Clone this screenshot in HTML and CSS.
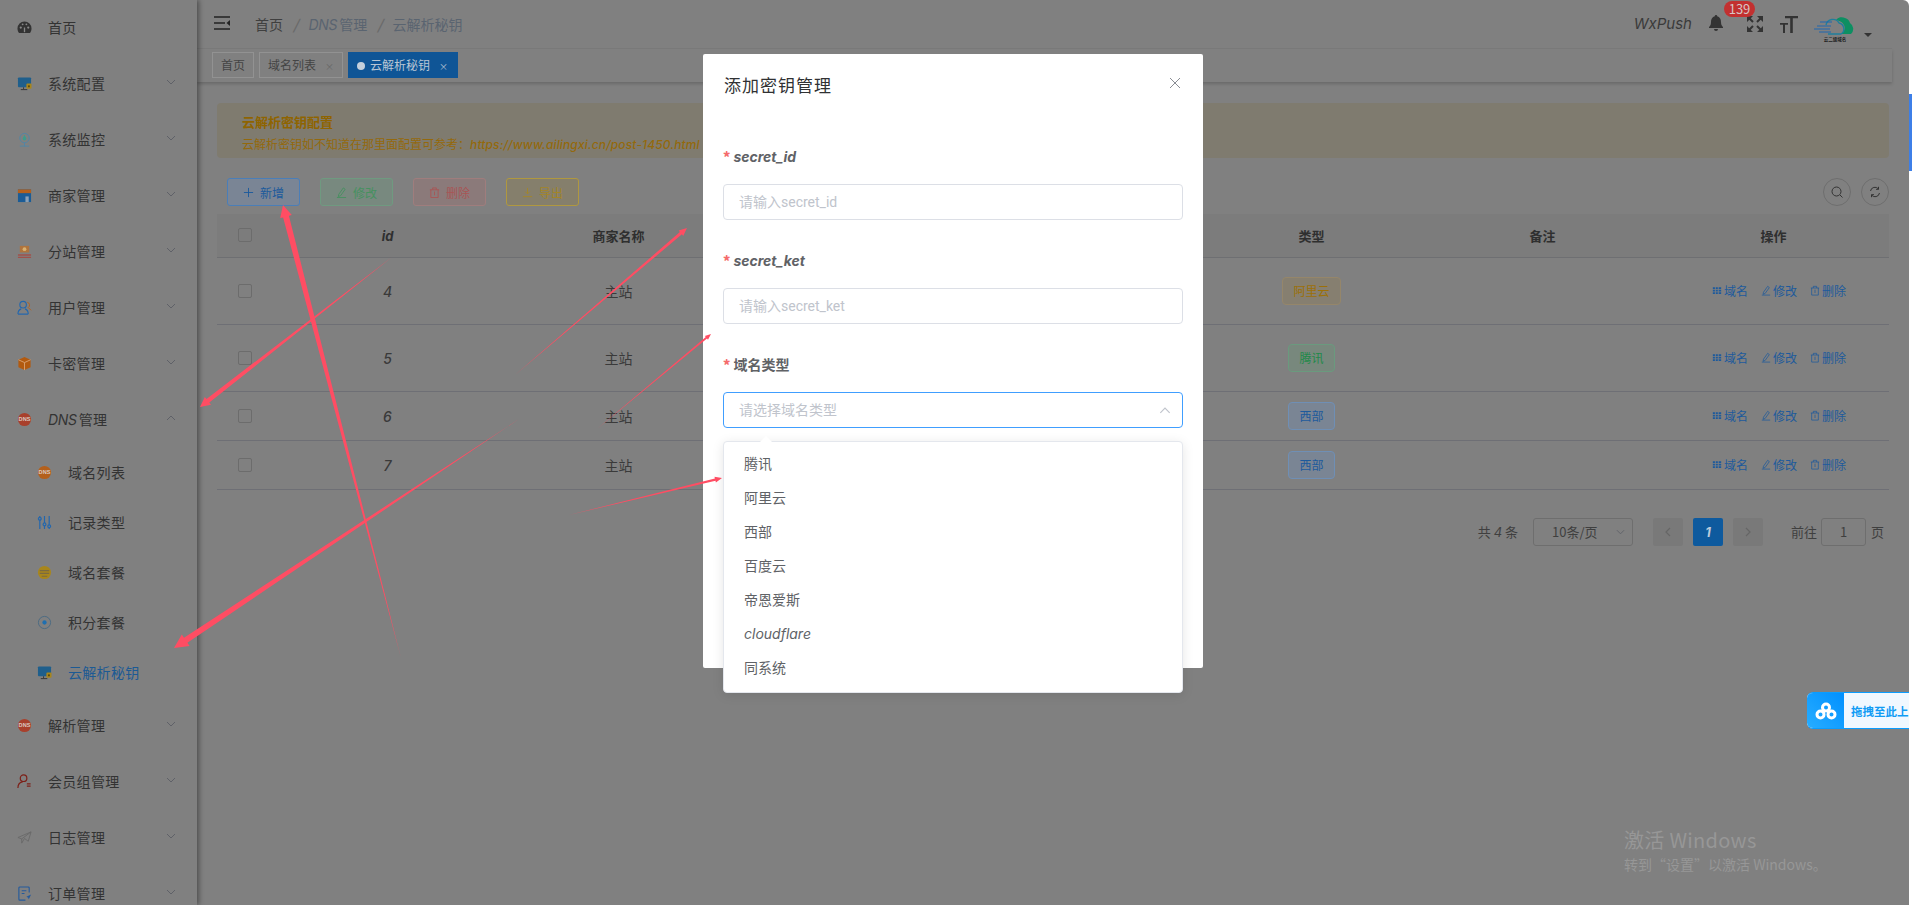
FILE: index.html
```html
<!DOCTYPE html>
<html lang="zh-CN">
<head>
    <meta charset="UTF-8">
    <title>云解析秘钥</title>
    <link rel="stylesheet" href="styles.css">
</head>
<body>

<div class="app">
    <!-- sidebar -->
    <aside class="side">
        <div class="nav-item">
            <svg class="nav-icon" viewBox="0 0 16 16"><path fill="#333" d="M8 1.500a7.500 7.500 0 0 0-7.500 7.500c0 2 .7 3.600 1.600 4.800h11.800c.9-1.200 1.600-2.800 1.600-4.800A7.500 7.500 0 0 0 8 1.500z"/><circle cx="4" cy="8" r="1.200" fill="#888"/><circle cx="12" cy="8" r="1.200" fill="#888"/><circle cx="6" cy="4.600" r="1" fill="#888"/><circle cx="10" cy="4.600" r="1" fill="#888"/><path stroke="#888" stroke-width="1.400" d="M8 13V8"/></svg>
            <span class="nav-text">首页</span>
        </div>
        <div class="nav-item">
            <svg class="nav-icon" viewBox="0 0 16 16"><rect x="1" y="1.500" width="14" height="10.500" rx="1" fill="#1f5f8c"/><path stroke="#333" d="M4 14.500h7M7 12v2"/><rect x="10" y="8" width="5.500" height="5.500" rx="1" fill="#a8861c"/><rect x="11.700" y="10" width="2" height="2" fill="#5a4a10"/></svg>
            <span class="nav-text">系统配置</span>
            <svg class="chev" viewBox="0 0 10 6"><path d="M1 1l4 4 4-4"/></svg>
        </div>
        <div class="nav-item">
            <svg class="nav-icon" viewBox="0 0 16 16"><circle cx="8" cy="6.500" r="5" fill="none" stroke="#4f86a8"/><path fill="#3d9c8c" d="M8 3l2 4a2 2 0 1 1-4 0z"/><path stroke="#4f86a8" fill="none" d="M3 15h10M8 11.500v3.500"/></svg>
            <span class="nav-text">系统监控</span>
            <svg class="chev" viewBox="0 0 10 6"><path d="M1 1l4 4 4-4"/></svg>
        </div>
        <div class="nav-item">
            <svg class="nav-icon" viewBox="0 0 16 16"><rect x="1" y="1.500" width="14" height="13.500" fill="#1b5c96"/><rect x="1" y="1.500" width="14" height="4" fill="#b4601c"/><rect x="9" y="9" width="3.500" height="6" fill="#8a9fb5"/></svg>
            <span class="nav-text">商家管理</span>
            <svg class="chev" viewBox="0 0 10 6"><path d="M1 1l4 4 4-4"/></svg>
        </div>
        <div class="nav-item">
            <svg class="nav-icon" viewBox="0 0 16 16"><path fill="#b0743c" d="M3 2h10v7H3z"/><circle cx="8" cy="5.500" r="2" fill="#d8b070"/><path fill="#a0504a" d="M1 11h14v1.500H1zM1 13.500h14V15H1z"/></svg>
            <span class="nav-text">分站管理</span>
            <svg class="chev" viewBox="0 0 10 6"><path d="M1 1l4 4 4-4"/></svg>
        </div>
        <div class="nav-item">
            <svg class="nav-icon" viewBox="0 0 16 16"><g fill="none" stroke="#2467ad" stroke-width="1.200"><circle cx="6.500" cy="5" r="3.500"/><path d="M1 15c0-4 2-5 3.500-5.500M12 15c0-4-2-5-3.500-5.500M1 15h11"/></g><path fill="none" stroke="#b4601c" d="M11 2.500a3 3 0 0 1 1 5.500l3 3"/></svg>
            <span class="nav-text">用户管理</span>
            <svg class="chev" viewBox="0 0 10 6"><path d="M1 1l4 4 4-4"/></svg>
        </div>
        <div class="nav-item">
            <svg class="nav-icon" viewBox="0 0 16 16"><path fill="#b25a10" d="M8 1l6.500 3v8L8 15l-6.500-3V4z"/><path stroke="#d8a070" fill="none" d="M1.500 4L8 7l6.500-3M8 7v8"/></svg>
            <span class="nav-text">卡密管理</span>
            <svg class="chev" viewBox="0 0 10 6"><path d="M1 1l4 4 4-4"/></svg>
        </div>
        <div class="nav-item">
            <svg class="nav-icon" viewBox="0 0 16 16"><circle cx="8" cy="8" r="7" fill="#a8402c"/><text x="8" y="10" class="dns-mark">DNS</text></svg>
            <span class="nav-text"><i class="en dns-word">DNS</i>管理</span>
            <svg class="chev" viewBox="0 0 10 6"><path d="M1 5l4-4 4 4"/></svg>
        </div>
        <div class="nav-sub">
            <svg class="nav-icon" viewBox="0 0 16 16"><circle cx="8" cy="8" r="7" fill="#b4601c"/><text x="8" y="10" class="dns-mark">DNS</text></svg>
            <span class="nav-text">域名列表</span>
        </div>
        <div class="nav-sub">
            <svg class="nav-icon" viewBox="0 0 16 16"><g fill="none" stroke="#2467ad" stroke-width="1.300"><path d="M3 1v14M8 1v14M13 1v14"/><circle cx="3" cy="4" r="1.500" fill="#808080"/><circle cx="8" cy="10" r="1.500" fill="#808080"/><circle cx="13" cy="12" r="1.500" fill="#808080"/></g></svg>
            <span class="nav-text">记录类型</span>
        </div>
        <div class="nav-sub">
            <svg class="nav-icon" viewBox="0 0 16 16"><circle cx="8" cy="8" r="7" fill="#a8861c"/><path stroke="#7a6a40" stroke-width="1.300" d="M3 6h10M3 9h10M5 12h6"/></svg>
            <span class="nav-text">域名套餐</span>
        </div>
        <div class="nav-sub">
            <svg class="nav-icon" viewBox="0 0 16 16"><circle cx="8" cy="8" r="6.500" fill="none" stroke="#4a6a82"/><circle cx="8" cy="8" r="2.300" fill="#1f6fb0"/></svg>
            <span class="nav-text">积分套餐</span>
        </div>
        <div class="nav-sub active">
            <svg class="nav-icon" viewBox="0 0 16 16"><rect x="1" y="1.500" width="14" height="10.500" rx="1" fill="#1f5f8c"/><path stroke="#333" d="M4 14.500h7M7 12v2"/><rect x="10" y="8" width="5.500" height="5.500" rx="1" fill="#a8861c"/><rect x="11.700" y="10" width="2" height="2" fill="#5a4a10"/></svg>
            <span class="nav-text">云解析秘钥</span>
        </div>
        <div class="nav-item">
            <svg class="nav-icon" viewBox="0 0 16 16"><circle cx="8" cy="8" r="7" fill="#a8402c"/><text x="8" y="10" class="dns-mark">DNS</text></svg>
            <span class="nav-text">解析管理</span>
            <svg class="chev" viewBox="0 0 10 6"><path d="M1 1l4 4 4-4"/></svg>
        </div>
        <div class="nav-item">
            <svg class="nav-icon" viewBox="0 0 16 16"><g fill="none" stroke="#7c2018" stroke-width="1.300"><circle cx="7" cy="4.500" r="3.500"/><path d="M1 15c0-4 2-6 5-6.500"/><path d="M10.500 10.500h4M10.500 13h4"/></g></svg>
            <span class="nav-text">会员组管理</span>
            <svg class="chev" viewBox="0 0 10 6"><path d="M1 1l4 4 4-4"/></svg>
        </div>
        <div class="nav-item">
            <svg class="nav-icon" viewBox="0 0 16 16"><path fill="none" stroke="#6a6a6a" d="M1 8l14-6-3 10-4-3-3 5V9.500zM5 9.500L15 2"/></svg>
            <span class="nav-text">日志管理</span>
            <svg class="chev" viewBox="0 0 10 6"><path d="M1 1l4 4 4-4"/></svg>
        </div>
        <div class="nav-item">
            <svg class="nav-icon" viewBox="0 0 16 16"><path fill="none" stroke="#245a9c" stroke-width="1.200" d="M13 7V2a1 1 0 0 0-1-1H3a1 1 0 0 0-1 1v12a1 1 0 0 0 1 1h6M5 5h5M5 8h3"/><path fill="#245a9c" d="M15 9l-5 2.500 2 1 .5 2z"/></svg>
            <span class="nav-text">订单管理</span>
            <svg class="chev" viewBox="0 0 10 6"><path d="M1 1l4 4 4-4"/></svg>
        </div>
    </aside>

    <div class="main">
        <!-- top bar -->
        <header class="topbar">
            <svg class="toggle" viewBox="0 0 16 14"><path stroke="#222" stroke-width="1.500" d="M0 1h16M0 7h11M0 13h16"/><path fill="#222" d="M16 4v6l-3.500-3z"/></svg>
            <div class="crumbs">
                <span class="crumb-home">首页</span>
                <i class="crumb-sep">/</i>
                <span class="crumb"><i class="en dns-word">DNS</i>管理</span>
                <i class="crumb-sep">/</i>
                <span class="crumb">云解析秘钥</span>
            </div>
            <div class="top-right">
                <span class="wxpush en">WxPush</span>
                <div class="bell">
                    <svg viewBox="0 0 14 16" width="14" height="16"><path fill="#333" d="M7 0a1.200 1.200 0 0 1 1.200 1.300C11 2 12 4.500 12 7c0 3 1 4 2 5v1H0v-1c1-1 2-2 2-5 0-2.500 1-5 3.800-5.700A1.200 1.200 0 0 1 7 0zM5 14h4a2 2 0 0 1-4 0z"/></svg>
                    <span class="badge">139</span>
                </div>
                <svg class="fs" viewBox="0 0 18 18"><g fill="none" stroke="#333" stroke-width="2"><path d="M3 3l4 4M15 15l-4-4M15 3l-4 4M3 15l4-4"/></g><path fill="#333" d="M1 1h6L1 7zM17 17h-6l6-6zM17 1v6l-6-6zM1 17v-6l6 6z"/></svg>
                <svg class="tt" viewBox="0 0 18 18"><path fill="#333" d="M5 1h13v2.200h-5.200V18h-2.600V3.200H5zM0 8h8v1.800H5V18H3V9.800H0z"/></svg>
                <svg class="logo" viewBox="0 0 40 25">
                    <path fill="#0d8f62" d="M22 3a7 7 0 0 1 9-2 7 7 0 0 1 5 5 7 7 0 0 1 1 11H27c6-4 5-12-5-14z"/>
                    <path fill="none" stroke="#1f7f9c" stroke-width="1.400" d="M12 8a7 7 0 0 1 13-2 6 6 0 0 1 2 11H14"/>
                    <path stroke="#1f66b0" stroke-width="1" d="M6 5h12M3 9h14M0 12h16M5 15h12"/>
                    <text x="21" y="24" class="logo-text">云二级域名</text>
                </svg>
                <i class="caret"></i>
            </div>
        </header>

        <nav class="tabs">
            <span class="tab">首页</span>
            <span class="tab">域名列表<b class="tab-x">×</b></span>
            <span class="tab tab-on"><i class="tab-dot"></i>云解析秘钥<b class="tab-x">×</b></span>
        </nav>

        <section class="content">
            <div class="alert">
                <div class="alert-title">云解析密钥配置</div>
                <div class="alert-desc">云解析密钥如不知道在那里面配置可参考：<i class="en alert-url">https://www.ailingxi.cn/post-1450.html</i></div>
            </div>

            <div class="toolbar">
                <button class="btn btn-new"><svg viewBox="0 0 12 12"><path d="M6 1v10M1 6h10"/></svg>新增</button>
                <button class="btn btn-edit"><svg viewBox="0 0 12 12"><path d="M3 8l5-7 2 1.500-5 7-2.500 1zM1 11.500h10"/></svg>修改</button>
                <button class="btn btn-del"><svg viewBox="0 0 12 12"><path d="M1 3h10M4 3V1h4v2M2 3v8.500h8V3M6 5v4"/></svg>删除</button>
                <button class="btn btn-exp"><svg viewBox="0 0 12 12"><path d="M6 1v6M3.500 5L6 7.500 8.500 5M1 10.500h10"/></svg>导出</button>
                <div class="tool-right">
                    <span class="round"><svg viewBox="0 0 12 12"><circle cx="5.500" cy="5.500" r="4.500"/><path d="M9 9l2.500 2.500"/></svg></span>
                    <span class="round"><svg viewBox="0 0 12 12"><path d="M1.500 5a4.500 4.500 0 0 1 8-2M10.500 7a4.500 4.500 0 0 1-8 2M9.500 .8v2.500H7M2.500 11.200V8.700H5"/></svg></span>
                </div>
            </div>

            <table class="grid">
                <colgroup>
                    <col class="col-check"><col><col><col><col><col><col><col>
                </colgroup>
                <thead>
                    <tr>
                        <th><i class="check"></i></th>
                        <th><i class="en">id</i></th>
                        <th>商家名称</th>
                        <th></th>
                        <th></th>
                        <th>类型</th>
                        <th>备注</th>
                        <th>操作</th>
                    </tr>
                </thead>
                <tbody>
                    <tr class="row-tall">
                        <td><i class="check"></i></td>
                        <td><i class="en">4</i></td>
                        <td>主站</td>
                        <td></td>
                        <td></td>
                        <td><span class="tag tag-yellow">阿里云</span></td>
                        <td></td>
                        <td>
                            <div class="acts">
                                <a><svg viewBox="0 0 12 12"><path class="fill" d="M1 2h2.500v2.200H1zM4.500 2H7v2.200H4.500zM8 2h3v2.200H8zM1 5h2.500v2.200H1zM4.500 5H7v2.200H4.500zM8 5h3v2.200H8zM1 8h2.500v2.200H1zM4.500 8H7v2.200H4.500zM8 8h3v2.200H8z"/></svg>域名</a>
                                <a><svg viewBox="0 0 12 12"><path d="M3 8l5-7 2 1.500-5 7-2.500 1zM1 11.500h10"/></svg>修改</a>
                                <a><svg viewBox="0 0 12 12"><path d="M1 3h10M4 3V1h4v2M2 3v8.500h8V3M6 5v4"/></svg>删除</a>
                            </div>
                        </td>
                    </tr>
                    <tr class="row-tall">
                        <td><i class="check"></i></td>
                        <td><i class="en">5</i></td>
                        <td>主站</td>
                        <td></td>
                        <td></td>
                        <td><span class="tag tag-green">腾讯</span></td>
                        <td></td>
                        <td>
                            <div class="acts">
                                <a><svg viewBox="0 0 12 12"><path class="fill" d="M1 2h2.500v2.200H1zM4.500 2H7v2.200H4.500zM8 2h3v2.200H8zM1 5h2.500v2.200H1zM4.500 5H7v2.200H4.500zM8 5h3v2.200H8zM1 8h2.500v2.200H1zM4.500 8H7v2.200H4.500zM8 8h3v2.200H8z"/></svg>域名</a>
                                <a><svg viewBox="0 0 12 12"><path d="M3 8l5-7 2 1.500-5 7-2.500 1zM1 11.500h10"/></svg>修改</a>
                                <a><svg viewBox="0 0 12 12"><path d="M1 3h10M4 3V1h4v2M2 3v8.500h8V3M6 5v4"/></svg>删除</a>
                            </div>
                        </td>
                    </tr>
                    <tr>
                        <td><i class="check"></i></td>
                        <td><i class="en">6</i></td>
                        <td>主站</td>
                        <td></td>
                        <td></td>
                        <td><span class="tag tag-blue">西部</span></td>
                        <td></td>
                        <td>
                            <div class="acts">
                                <a><svg viewBox="0 0 12 12"><path class="fill" d="M1 2h2.500v2.200H1zM4.500 2H7v2.200H4.500zM8 2h3v2.200H8zM1 5h2.500v2.200H1zM4.500 5H7v2.200H4.500zM8 5h3v2.200H8zM1 8h2.500v2.200H1zM4.500 8H7v2.200H4.500zM8 8h3v2.200H8z"/></svg>域名</a>
                                <a><svg viewBox="0 0 12 12"><path d="M3 8l5-7 2 1.500-5 7-2.500 1zM1 11.500h10"/></svg>修改</a>
                                <a><svg viewBox="0 0 12 12"><path d="M1 3h10M4 3V1h4v2M2 3v8.500h8V3M6 5v4"/></svg>删除</a>
                            </div>
                        </td>
                    </tr>
                    <tr>
                        <td><i class="check"></i></td>
                        <td><i class="en">7</i></td>
                        <td>主站</td>
                        <td></td>
                        <td></td>
                        <td><span class="tag tag-blue">西部</span></td>
                        <td></td>
                        <td>
                            <div class="acts">
                                <a><svg viewBox="0 0 12 12"><path class="fill" d="M1 2h2.500v2.200H1zM4.500 2H7v2.200H4.500zM8 2h3v2.200H8zM1 5h2.500v2.200H1zM4.500 5H7v2.200H4.500zM8 5h3v2.200H8zM1 8h2.500v2.200H1zM4.500 8H7v2.200H4.500zM8 8h3v2.200H8z"/></svg>域名</a>
                                <a><svg viewBox="0 0 12 12"><path d="M3 8l5-7 2 1.500-5 7-2.500 1zM1 11.500h10"/></svg>修改</a>
                                <a><svg viewBox="0 0 12 12"><path d="M1 3h10M4 3V1h4v2M2 3v8.500h8V3M6 5v4"/></svg>删除</a>
                            </div>
                        </td>
                    </tr>
                </tbody>
            </table>

            <div class="pager">
                <span class="pg-total">共 <i class="en">4</i> 条</span>
                <span class="pg-size">10条/页<svg viewBox="0 0 10 6"><path d="M1 1l4 4 4-4"/></svg></span>
                <span class="pg-btn"><svg viewBox="0 0 6 10"><path d="M5 1L1 5l4 4"/></svg></span>
                <span class="pg-btn pg-on"><i class="en">1</i></span>
                <span class="pg-btn"><svg viewBox="0 0 6 10"><path d="M1 1l4 4-4 4"/></svg></span>
                <span class="pg-go">前往</span>
                <span class="pg-input">1</span>
                <span class="pg-unit">页</span>
            </div>
        </section>
    </div>
</div>

<!-- dialog -->
<div class="modal">
    <div class="modal-head">
        <span class="modal-title">添加密钥管理</span>
        <svg class="modal-x" viewBox="0 0 12 12"><path d="M1 1l10 10M11 1L1 11"/></svg>
    </div>
    <div class="modal-body">
        <label class="field-label"><b class="req">*</b><i class="en">secret_id</i></label>
        <input class="field-input" placeholder="请输入secret_id">
        <label class="field-label"><b class="req">*</b><i class="en">secret_ket</i></label>
        <input class="field-input" placeholder="请输入secret_ket">
        <label class="field-label"><b class="req">*</b>域名类型</label>
        <div class="select-wrap">
            <input class="field-input field-focus" placeholder="请选择域名类型" readonly>
            <svg class="select-arrow" viewBox="0 0 10 6"><path d="M1 5l4-4 4 4"/></svg>
        </div>
    </div>
    <div class="dropdown">
        <i class="drop-arrow"></i>
        <ul>
            <li>腾讯</li>
            <li>阿里云</li>
            <li>西部</li>
            <li>百度云</li>
            <li>帝恩爱斯</li>
            <li><i class="en">cloudflare</i></li>
            <li>同系统</li>
        </ul>
    </div>
</div>

<!-- hand drawn annotation arrows -->
<svg class="marks" viewBox="0 0 1912 905">
    <polygon points="401,658 288.900,215.800 291.800,215.100 283,205 280.200,218.100 283.100,217.400"/>
    <polygon points="392,257 209.300,402.600 211,404.800 200,407 204.800,396.900 206.500,399"/>
    <polygon points="519,419 187.400,642.800 189.600,646.100 174,648 181.800,634.500 184,637.800"/>
    <polygon points="515,375 681.900,234.300 683.200,235.900 687,228 678.600,230.500 679.900,232.100"/>
    <polygon points="597,429 707,338.600 708,339.700 711,334 704.800,335.900 705.800,337"/>
    <polygon points="569,515 715.500,480.800 715.900,482.500 722,478 714.500,476.700 714.900,478.400"/>
</svg>

<!-- upload helper tab -->
<div class="upload">
    <span class="upload-icon">
        <svg viewBox="0 0 22 18" width="22" height="18"><g fill="none" stroke="#fff" stroke-width="3"><circle cx="11" cy="5.500" r="3.500"/><circle cx="5.500" cy="12.500" r="3.500"/><circle cx="16.500" cy="12.500" r="3.500"/></g></svg>
    </span>
    <span class="upload-text">拖拽至此上</span>
</div>

<div class="activate">
    <div class="activate-big">激活 Windows</div>
    <div class="activate-small">转到“设置”以激活 Windows。</div>
</div>

<i class="thumb"></i>

</body>
</html>
```

FILE: styles.css
```css
* {
    box-sizing: border-box;
}

html, body {
    margin: 0;
    height: 905px;
    overflow: hidden;
}

body {
    background-color: #fff;
    font-family: "Noto Sans CJK SC", "Noto Sans", sans-serif;
    font-size: 14px;
    color: #3d3d3d;
    position: relative;
}

i {
    font-style: normal;
}

/* latin text is a slanted face in the original */
.en {
    font-family: "Inter", "Noto Sans", sans-serif;
    font-style: italic;
}

.dns-word {
    margin-right: 2px;
    letter-spacing: -0.3px;
}

.app {
    display: flex;
    width: 1909px;
    height: 905px;
    background-color: #808080;
    border-top-right-radius: 6px;
    overflow: hidden;
}

/* sidebar */
.side {
    width: 197px;
    flex: none;
    background-color: #808080;
    box-shadow: 2px 0 5px rgba(0, 0, 0, 0.4);
    position: relative;
    z-index: 2;
}

.nav-item, .nav-sub {
    display: flex;
    align-items: center;
    padding-left: 17px;
    height: 56px;
    color: #333;
}

.nav-sub {
    height: 50px;
    padding-left: 37px;
}

.nav-sub.active {
    color: #1c5a94;
}

.nav-icon {
    width: 15px;
    height: 15px;
    flex: none;
    margin-top: -2px;
}

.nav-text {
    margin-left: 16px;
    margin-top: -2px;
    letter-spacing: 0.3px;
}

.dns-mark {
    font-family: "Liberation Sans", sans-serif;
    font-size: 6px;
    font-weight: bold;
    fill: #d8c8c0;
    text-anchor: middle;
}

.chev {
    width: 10px;
    height: 6px;
    margin-left: auto;
    margin-right: 21px;
    margin-top: -5px;
    fill: none;
    stroke: #5f6168;
    stroke-width: 1;
}

/* main column */
.main {
    width: 1695px;
    flex: none;
}

.topbar {
    height: 49px;
    display: flex;
    align-items: center;
    padding-left: 17px;
    padding-right: 20px;
    border-bottom: 1px solid #7a7a7a;
}

.toggle {
    width: 16px;
    height: 14px;
    margin-top: -3px;
    flex: none;
}

.crumbs {
    margin-left: 25px;
    margin-top: -1px;
    display: flex;
    align-items: center;
}

.crumb-home {
    color: #3f3f3f;
}

.crumb {
    color: #5a6470;
}

.crumb-sep {
    margin: 0 10px;
    color: #6a6a6a;
    font-style: italic;
    font-weight: bold;
}

.top-right {
    margin-left: auto;
    display: flex;
    align-items: center;
}

.wxpush {
    font-size: 15px;
    color: #3a3a3a;
    margin-right: 17px;
    margin-top: -1px;
}

.bell {
    width: 14px;
    height: 16px;
    position: relative;
    margin-right: 23px;
    margin-top: -2px;
}

.badge {
    position: absolute;
    left: 15px;
    top: -14px;
    height: 16px;
    line-height: 16px;
    width: 31px;
    border-radius: 8px;
    background-color: #c23030;
    color: #d8c4c4;
    font-size: 13px;
    text-align: center;
}

.fs, .tt {
    width: 18px;
    height: 18px;
    flex: none;
}

.fs {
    margin-right: 16px;
}

.tt {
    margin-right: 16px;
}

.logo {
    width: 40px;
    height: 25px;
    margin-top: 11px;
    flex: none;
}

.logo-text {
    font-size: 4.500px;
    fill: #222;
    text-anchor: middle;
    font-weight: bold;
}

.caret {
    margin-left: 10px;
    margin-top: 22px;
    width: 0;
    height: 0;
    border-left: 4px solid transparent;
    border-right: 4px solid transparent;
    border-top: 4px solid #333;
}

/* tabs */
.tabs {
    height: 33px;
    display: flex;
    gap: 5px;
    padding: 3px 0 0 15px;
    box-shadow: 0 2px 3px rgba(0, 0, 0, 0.18);
}

.tab {
    height: 26px;
    line-height: 24px;
    padding: 0 8px;
    border: 1px solid #929292;
    font-size: 12px;
    color: #444;
    white-space: nowrap;
}

.tab-x {
    font-weight: normal;
    margin-left: 9px;
    color: #666;
    font-size: 9px;
}

.tab-on {
    background-color: #0f5596;
    border-color: #0f5596;
    color: #b9c6d4;
    padding-right: 9px;
}

.tab-on .tab-x {
    color: #b9c6d4;
}

.tab-dot {
    display: inline-block;
    width: 8px;
    height: 8px;
    border-radius: 50%;
    background-color: #c4d0dc;
    margin-right: 5px;
}

/* page body */
.content {
    padding: 21px 3px 0 20px;
}

.alert {
    height: 55px;
    padding: 9px 25px 0;
    background-color: #7f7b6f;
    border-radius: 4px;
}

.alert-title {
    font-size: 13px;
    font-weight: bold;
    line-height: 20px;
    color: #8f6400;
}

.alert-desc {
    font-size: 12px;
    line-height: 20px;
    margin-top: 2px;
    color: #94690c;
}

.alert-url {
    letter-spacing: 0.15px;
    font-weight: 500;
}

.toolbar {
    display: flex;
    align-items: center;
    gap: 20px;
    margin-top: 20px;
    padding: 0 0 0 10px;
    height: 28px;
}

.btn {
    width: 73px;
    height: 28px;
    border-radius: 3px;
    border: 1px solid;
    font-family: inherit;
    font-size: 12px;
    padding: 0;
    display: flex;
    align-items: center;
    justify-content: center;
    gap: 6px;
}

.btn svg {
    width: 11px;
    height: 11px;
    fill: none;
    stroke: currentColor;
    stroke-width: 1;
}

.btn-new {
    background-color: #7a8595;
    border-color: #4a7eb8;
    color: #1a5a9c;
}

.btn-edit {
    background-color: #78897f;
    border-color: #6f9a80;
    color: #46915f;
}

.btn-del {
    background-color: #8b7a7a;
    border-color: #9f7d7d;
    color: #a85555;
}

.btn-exp {
    background-color: #857f6c;
    border-color: #b0983f;
    color: #a38528;
}

.tool-right {
    margin-left: auto;
    display: flex;
    gap: 10px;
}

.round {
    width: 28px;
    height: 28px;
    border: 1px solid #6e6e6e;
    border-radius: 50%;
    display: flex;
    align-items: center;
    justify-content: center;
}

.round svg {
    width: 12px;
    height: 12px;
    fill: none;
    stroke: #333;
    stroke-width: 1;
}

/* table */
.grid {
    width: 1672px;
    margin-top: 8px;
    border-collapse: collapse;
    table-layout: fixed;
}

.col-check {
    width: 55px;
}

.grid th {
    height: 43px;
    background-color: #7c7c7c;
    border-bottom: 1px solid #6e6f72;
    font-size: 13px;
    font-weight: bold;
    color: #2f2f2f;
    text-align: center;
    padding: 0;
}

.grid td {
    height: 49px;
    border-bottom: 1px solid #6e6f75;
    text-align: center;
    padding: 0;
    font-size: 14px;
    color: #3a3a3a;
}

.grid .row-tall td {
    height: 67px;
}

.grid td .en {
    font-weight: 500;
}

.check {
    display: block;
    width: 14px;
    height: 14px;
    margin-left: 21px;
    border: 1px solid #6c6c6c;
    border-radius: 2px;
}

.tag {
    display: inline-block;
    height: 28px;
    line-height: 26px;
    padding: 0 10px;
    border: 1px solid;
    border-radius: 4px;
    font-size: 12px;
    vertical-align: middle;
}

.tag-yellow {
    background-color: #867f70;
    border-color: #95866a;
    color: #9c7008;
}

.tag-green {
    background-color: #78887d;
    border-color: #6a9a7e;
    color: #1f8a4a;
}

.tag-blue {
    background-color: #7a8594;
    border-color: #6f8fb5;
    color: #1d5a9c;
}

.acts {
    display: flex;
    justify-content: flex-end;
    gap: 13px;
    padding-right: 43px;
    font-size: 12px;
}

.acts a {
    display: flex;
    align-items: center;
    gap: 2px;
    color: #1d5a9c;
}

.acts svg {
    width: 10px;
    height: 11px;
    fill: none;
    stroke: #1d5a9c;
    stroke-width: 0.9;
}

.acts .fill {
    fill: #1d5a9c;
    stroke: none;
}

/* pagination */
.pager {
    display: flex;
    align-items: center;
    justify-content: flex-end;
    margin-top: 28px;
    padding-right: 5px;
    height: 28px;
    font-size: 13px;
    color: #3f3f3f;
}

.pg-total {
    margin-right: 15px;
    white-space: nowrap;
}

.pg-size {
    width: 100px;
    height: 28px;
    border: 1px solid #6e6e6e;
    border-radius: 3px;
    padding-left: 18px;
    margin-right: 20px;
    line-height: 26px;
    display: flex;
    align-items: center;
    justify-content: space-between;
    padding-right: 7px;
    white-space: nowrap;
}

.pg-size svg {
    width: 9px;
    height: 6px;
    fill: none;
    stroke: #5f6168;
}

.pg-btn {
    width: 30px;
    height: 28px;
    margin-right: 10px;
    border-radius: 2px;
    background-color: #797979;
    display: flex;
    align-items: center;
    justify-content: center;
}

.pg-btn svg {
    width: 6px;
    height: 10px;
    fill: none;
    stroke: #666;
    stroke-width: 1.200;
}

.pg-on {
    background-color: #0e5a9e;
    color: #bccadb;
    font-weight: bold;
}

.pg-go {
    margin-left: 18px;
    margin-right: 4px;
}

.pg-input {
    width: 45px;
    height: 28px;
    border: 1px solid #6e6e6e;
    border-radius: 3px;
    line-height: 26px;
    text-align: center;
}

.pg-unit {
    margin-left: 5px;
}

/* dialog */
.modal {
    position: absolute;
    left: 703px;
    top: 54px;
    width: 500px;
    height: 614px;
    background-color: #fff;
    border-radius: 2px;
    z-index: 5;
}

.modal-head {
    height: 83px;
    padding: 19px 22px 0 21px;
    display: flex;
    justify-content: space-between;
    align-items: flex-start;
}

.modal-title {
    font-size: 17px;
    line-height: 24px;
    letter-spacing: 1px;
    color: #303133;
}

.modal-x {
    width: 12px;
    height: 12px;
    margin-top: 4px;
    fill: none;
    stroke: #8a8d94;
    stroke-width: 1;
}

.modal-body {
    padding: 0 20px;
}

.field-label {
    display: block;
    height: 40px;
    line-height: 38px;
    margin-bottom: 7px;
    font-size: 14px;
    font-weight: bold;
    color: #606266;
}

.req {
    color: #f56c6c;
    margin-right: 3px;
    font-style: normal;
}

.field-input {
    display: block;
    width: 460px;
    height: 36px;
    margin-bottom: 21px;
    padding: 0 15px;
    border: 1px solid #dcdfe6;
    border-radius: 4px;
    font-family: "Roboto", "Noto Sans CJK SC", sans-serif;
    font-size: 14px;
    outline: none;
}

.field-input::placeholder {
    color: #c0c4cc;
}

.field-focus {
    border-color: #409eff;
}

.select-wrap {
    position: relative;
}

.select-arrow {
    position: absolute;
    right: 12px;
    top: 15px;
    width: 12px;
    height: 7px;
    fill: none;
    stroke: #c0c4cc;
}

.dropdown {
    position: absolute;
    left: 20px;
    top: 387px;
    width: 460px;
    background-color: #fff;
    border: 1px solid #e4e7ed;
    border-radius: 4px;
    box-shadow: 0 2px 12px rgba(0, 0, 0, 0.1);
}

.drop-arrow {
    position: absolute;
    left: 36px;
    top: -6px;
    width: 0;
    height: 0;
    border-left: 6px solid transparent;
    border-right: 6px solid transparent;
    border-bottom: 6px solid #fff;
}

.dropdown ul {
    list-style: none;
    margin: 0;
    padding: 6px 0;
}

.dropdown li {
    height: 34px;
    line-height: 31px;
    padding-left: 20px;
    font-size: 14px;
    color: #606266;
}

/* annotations, sit on top of everything */
.marks {
    position: absolute;
    left: 0;
    top: 0;
    width: 1912px;
    height: 905px;
    z-index: 6;
    pointer-events: none;
}

.marks polygon {
    fill: #ff4d63;
}

.upload {
    position: absolute;
    left: 1807px;
    top: 692px;
    width: 102px;
    height: 37px;
    display: flex;
    align-items: center;
    background-color: #f0f8ff;
    border-top: 1px solid #0a9dff;
    border-bottom: 1px solid #0a9dff;
    border-radius: 6px 0 0 6px;
    overflow: hidden;
    z-index: 4;
}

.upload-icon {
    width: 37px;
    height: 37px;
    flex: none;
    display: flex;
    align-items: center;
    justify-content: center;
    background: linear-gradient(45deg, #28adff, #0090ff);
    border-radius: 6px 0 0 6px;
}

.upload-text {
    margin-left: 7px;
    font-size: 11.500px;
    font-weight: bold;
    color: #109cf5;
    white-space: nowrap;
}

.activate {
    position: absolute;
    left: 1624px;
    top: 826px;
    color: #979797;
    font-family: "Noto Sans CJK SC", "Noto Sans", sans-serif;
    z-index: 4;
}

.activate-big {
    font-size: 20px;
    line-height: 28px;
    letter-spacing: 0.3px;
}

.activate-small {
    font-size: 14px;
    line-height: 20px;
}

.thumb {
    position: absolute;
    right: 0;
    top: 94px;
    width: 3px;
    height: 77px;
    background-color: #3d7fe8;
}
```
